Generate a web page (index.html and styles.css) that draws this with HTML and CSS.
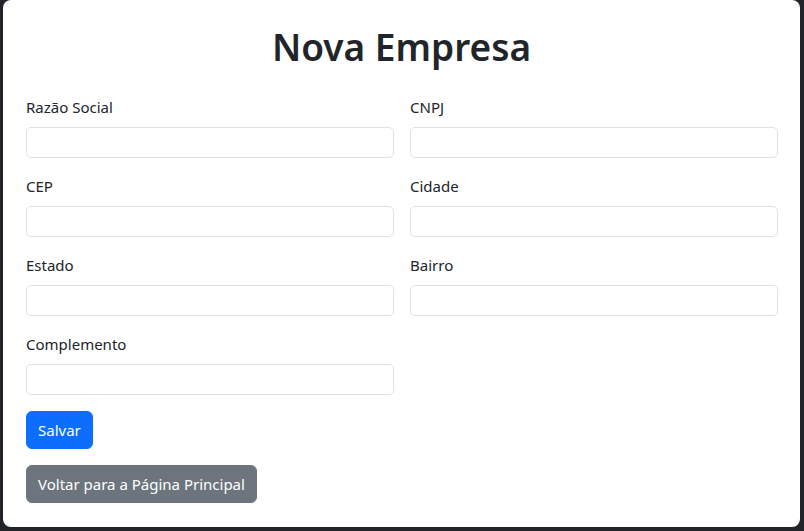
FILE: index.html
```html
<!DOCTYPE html>
<html lang="pt-BR">
<head>
<meta charset="utf-8">
<title>Nova Empresa</title>
<link rel="stylesheet" href="styles.css">
</head>
<body>
<div class="card">
  <h1 class="title">Nova Empresa</h1>
  <form class="form">
    <div class="grid">
      <div class="field">
        <label class="label" for="razao">Razão Social</label>
        <input class="input" id="razao" type="text">
      </div>
      <div class="field">
        <label class="label" for="cnpj">CNPJ</label>
        <input class="input" id="cnpj" type="text">
      </div>
      <div class="field">
        <label class="label" for="cep">CEP</label>
        <input class="input" id="cep" type="text">
      </div>
      <div class="field">
        <label class="label" for="cidade">Cidade</label>
        <input class="input" id="cidade" type="text">
      </div>
      <div class="field">
        <label class="label" for="estado">Estado</label>
        <input class="input" id="estado" type="text">
      </div>
      <div class="field">
        <label class="label" for="bairro">Bairro</label>
        <input class="input" id="bairro" type="text">
      </div>
      <div class="field">
        <label class="label" for="complemento">Complemento</label>
        <input class="input" id="complemento" type="text">
      </div>
    </div>
    <div class="actions">
      <button type="button" class="btn btn-primary">Salvar</button>
      <button type="button" class="btn btn-secondary">Voltar para a Página Principal</button>
    </div>
  </form>
</div>
</body>
</html>
```
FILE: styles.css
```css
* { box-sizing: border-box; }
html, body { height: 100%; }
body {
  margin: 0;
  padding: 0 4px 4px 3px;
  background: #212529;
  font-family: "Noto Sans", "Open Sans", sans-serif;
  color: #212529;
  font-size: 16px;
  line-height: 1.5;
}
.card {
  background: #fff;
  border-radius: 8px;
  height: 527px;
  padding: 23px 23px 24px 23px;
}
.title {
  margin: 0 0 24px 0;
  text-align: center;
  font-size: 37px;
  font-weight: 600;
  line-height: 48px;
}
.grid {
  display: grid;
  grid-template-columns: 368px 368px;
  column-gap: 16px;
  row-gap: 16px;
}
.field {
  display: flex;
  flex-direction: column;
}
.label {
  display: block;
  margin-bottom: 8px;
  font-size: 15px;
  line-height: 24px;
}
.input {
  height: 31px;
  border: 1px solid #dee2e6;
  border-radius: 5px;
  padding: 4px 12px;
  font: inherit;
  background: #fff;
}
.actions {
  margin-top: 16px;
  display: flex;
  flex-direction: column;
  align-items: flex-start;
  gap: 16px;
}
.btn {
  font: inherit;
  font-size: 15px;
  line-height: 24px;
  height: 38px;
  padding: 6px 11px;
  border: 1px solid transparent;
  border-radius: 6px;
  color: #fff;
  cursor: pointer;
}
.btn-primary { background: #0d6efd; border-color: #0d6efd; }
.btn-secondary { background: #6c757d; border-color: #6c757d; }
```
